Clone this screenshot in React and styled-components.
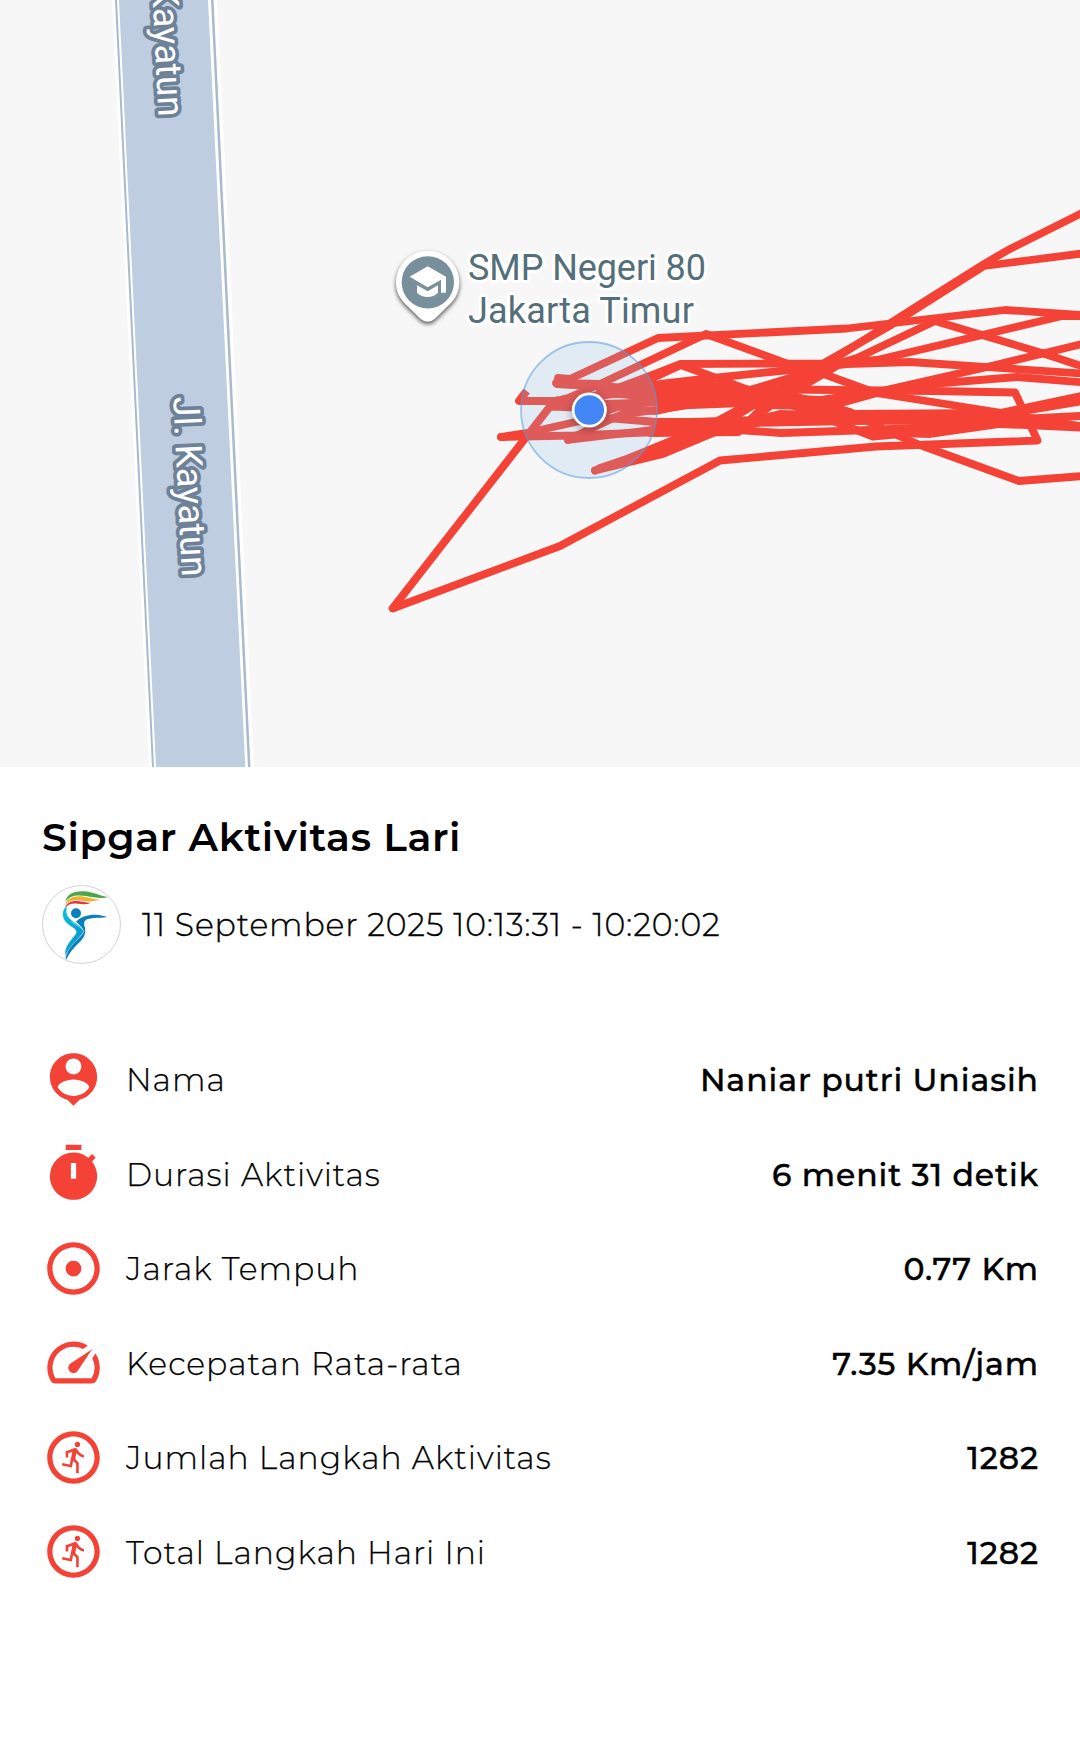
import React from 'react';
import styled, { createGlobalStyle } from 'styled-components'
import { MdTimer, MdAdjust, MdSpeed, MdOutlineRunCircle } from 'react-icons/md'

const tracks = [
    "558,378 570,379 658,338 847,328.5 1005,310 1090,315.5",
    "556,383 600,384 706,334 788,364 818,372 876,393 996,412 1090,428",
    "590,398 623,386 655,374 680,364 823,363.5 877,360 1062,316 1090,316",
    "640,384 681,365 743,388 800,408 873,436.5 900,434",
    "590,400 625,389 660,384 713,378 790,370 847,364 910,362 1090,374",
    "723,424 791,382 891,325 984,266 1090,252.5",
    "738,432 762,412 828,363 914,308 984,264 1008,250 1090,209",
    "743,392 823,368 857,358 935,321 982,335 1042,353 1090,369",
    "600,392 700,402 790,404 877,392 983,368 1090,342",
    "750,405 830,406 877,393 930,384 1017,377 1090,383",
    "558,384 625,388 700,390 786,389.5 933,391 1015,392.5 1037.5,440.5 876,446.5 720,460.5 560,546 392.5,608.5 550,406.5 590,408",
    "700,384 790,395 850,412 885,430 920,445 1019,481 1090,475.5",
    "557,400.5 600,404 640,403 700,400 790,402 850,414 1000,413 1090,394",
    "556,401 568,398 600,384",
    "501,437 575,435.5 657,432 700,422 850,417 1000,415 1090,400",
    "501,437 529,432.5 580,421 625,404 690,394 740,390",
    "568,440 590,429 620,415 690,405 770,402",
    "568,440 610,435 700,424 850,421 1000,420 1090,415.5",
    "595,470.5 663,454 730,426 780,414 850,416",
    "595,470.5 624,460 668,442 710,425 760,398 830,366",
    "600,468 640,455 680,442 705,431",
    "650,433 738,432 762,408 800,388 840,364",
    "738,430 781,433 870,430 977,425 1030,422 1090,427",
    "590,396 640,392 720,397 800,400 840,410 880,423",
    "600,404 640,410 656,411 693,403 740,402 800,402",
    "600,410 607,418 656,422 690,422 740,421 830,418",
    "645,421 690,427 740,427 780,418",
    "557,384 600,385 660,394 740,396 820,400",
    "625,390 680,384 740,390",
    "870,432 930,434 1000,424 1090,428",
]

const rows = [
    { icon: PersonPin, label: "Nama", value: "Naniar putri Uniasih" },
    { icon: MdTimer, label: "Durasi Aktivitas", value: "6 menit 31 detik" },
    { icon: MdAdjust, label: "Jarak Tempuh", value: "0.77 Km" },
    { icon: MdSpeed, label: "Kecepatan Rata-rata", value: "7.35 Km/jam" },
    { icon: MdOutlineRunCircle, label: "Jumlah Langkah Aktivitas", value: "1282" },
    { icon: MdOutlineRunCircle, label: "Total Langkah Hari Ini", value: "1282" },
]

const GlobalStyle = createGlobalStyle`
    body {
        margin: 0;
        background: #FFFFFF;
    }
`;

const Page = styled.div`
    display: flex;
    flex-direction: column;
    width: 1080px;
    height: 1738px;
    overflow: hidden;
    background: #FFFFFF;
    color: #000000;
    font-family: Montserrat, Inter, sans-serif;
`;

const MapView = styled.svg`
    display: block;
    flex: none;
    width: 1080px;
    height: 767px;
    background: #F7F7F7;
    font-family: Roboto, sans-serif;
    font-size: 36px;
`;

const Street = styled.text`
    fill: #FFFFFF;
    stroke: #6D8199;
    stroke-width: 7.5px;
    stroke-linejoin: round;
    paint-order: stroke;
    text-anchor: end;
    font-size: 36.7px;
    font-weight: 400;
`;

const Place = styled.text`
    fill: #546E7A;
    stroke: #FFFFFF;
    stroke-width: 6px;
    stroke-linejoin: round;
    paint-order: stroke;
`;

const Details = styled.div`
    display: flex;
    flex-direction: column;
    padding: 46px 42px 0;
`;

const Title = styled.h1`
    margin: 0;
    font-size: 39.4px;
    font-weight: 600;
    line-height: 48px;
    letter-spacing: 0.68px;
`;

const DateRow = styled.div`
    display: flex;
    align-items: center;
    gap: 21px;
    margin-top: 24px;
    height: 79px;
`;

const Logo = styled.svg`
    width: 79px;
    height: 79px;
`;

const DateText = styled.span`
    font-size: 31.5px;
    font-weight: 300;
    line-height: 38px;
    letter-spacing: 0.84px;
    -webkit-text-stroke: 0.35px #000000;
`;

const List = styled.div`
    display: flex;
    flex-direction: column;
    gap: 31.5px;
    margin-top: 83.5px;
`;

const Row = styled.div`
    display: flex;
    align-items: center;
    height: 63px;
    font-size: 31.5px;
    line-height: 38px;

    svg {
        width: 63px;
        height: 63px;
        margin-right: 21px;
        color: #F44336;
    }
`;

const Label = styled.span`
    flex: 1;
    padding-top: 2px;
    font-weight: 300;
    letter-spacing: 0.98px;
    -webkit-text-stroke: 0.25px #000000;
`;

const Value = styled.span`
    margin-right: -1px;
    padding-top: 2px;
    font-weight: 500;
    letter-spacing: 0.92px;
    -webkit-text-stroke: 0.4px #000000;
`;

function PersonPin() {
    return (
        <svg viewBox="0 0 24 24" fill="currentColor">
            <path d="M12 2c-4.97 0-9 4.03-9 9 0 4.17 2.84 7.67 6.69 8.69L12 22l2.31-2.31C18.16 18.67 21 15.17 21 11c0-4.97-4.03-9-9-9zm0 2c1.66 0 3 1.34 3 3s-1.34 3-3 3-3-1.34-3-3 1.34-3 3-3zm0 14.3c-2.5 0-4.71-1.28-6-3.22.03-1.99 4-3.08 6-3.08 1.99 0 5.97 1.09 6 3.08-1.29 1.94-3.5 3.22-6 3.22z" />
        </svg>
    )
}

function SipgarLogo() {
    return (
        <Logo viewBox="36 254 237 237">
            <defs>
                <linearGradient id="body" x1="0" y1="0" x2="1" y2="1">
                    <stop offset="0" stopColor="#00C4DC" />
                    <stop offset="1" stopColor="#0A8FC8" />
                </linearGradient>
            </defs>
            <circle cx="154.5" cy="372.5" r="117" fill="#FFFFFF" stroke="#BDBDBD" strokeWidth="2" />
            <path d="M107 303C108 284 130 272 160 273C190 274 208 287 235 290C214 297 190 291 168 287C140 283 120 286 107 303Z" fill="#4CA64C" />
            <path d="M106 314C108 296 128 287 152 288C176 290 190 298 209 297C194 305 174 304 156 301C132 298 116 301 106 314Z" fill="#F5B02E" />
            <path d="M105 324C107 309 122 301 142 302C158 303 166 307 182 307C170 313 156 312 144 310C126 308 114 311 105 324Z" fill="#E0393A" />
            <path d="M105 322C93 338 98 360 118 374C134 386 143 390 138 400C126 418 102 436 106 466C114 440 142 420 158 399C164 386 150 378 132 366C112 352 105 340 111 321Z" fill="url(#body)" />
            <circle cx="138" cy="339" r="15" fill="#0780BE" />
            <path d="M138 364C150 350 176 342 198 343C212 344 222 347 232 350C210 354 190 351 174 356C162 360 160 368 165 382C168 404 160 414 146 428C130 444 116 460 108 479C104 456 118 438 138 420C154 405 164 396 158 385C154 377 146 372 138 364Z" fill="#0780BE" />
            <path d="M124 364C140 376 158 382 161 394C156 410 116 434 108 466" fill="none" stroke="#FFFFFF" strokeWidth="1.5" />
        </Logo>
    )
}

function RunMap() {
    return (
        <MapView viewBox="0 0 1080 767">
            <polygon points="112,0 217,0 254,767 149,767" fill="#FFFFFF" />
            <polygon points="115,0 213.5,0 250.5,767 152,767" fill="#A9BACD" />
            <polygon points="117,0 211,0 248,767 154,767" fill="#FFFFFF" />
            <polygon points="119,0 208,0 245.3,767 156,767" fill="#BECDDF" />
            <Street transform="translate(158.5 117) rotate(87.2)">Jl. Kayatun</Street>
            <Street transform="translate(182 577) rotate(87.2)">Jl. Kayatun</Street>

            <g fill="none" stroke="#F44336" strokeWidth="7.8" strokeLinejoin="round" strokeLinecap="round">
                {tracks.map((points) => <polyline key={points} points={points} />)}
                <polyline points="526.7,391 519,401 557,401" strokeLinecap="butt" />
            </g>

            <Place x="468" y="279.7" letterSpacing="-0.08">SMP Negeri 80</Place>
            <Place x="468" y="322.8" letterSpacing="0.17">Jakarta Timur</Place>

            <g transform="translate(380 230) scale(0.3333)">
                <path d="M143 62C91 62 48 104 48 157C48 184 58 204 76 222L122 267Q143 284 164 267L210 222C228 204 238 184 238 157C238 104 195 62 143 62Z" fill="#FFFFFF" style={{ filter: "drop-shadow(0 7px 6px rgba(0, 0, 0, 0.65))" }} />
                <circle cx="143.5" cy="157" r="78.5" fill="#78909C" />
                <path d="M143 109L198 140V188H183V149L143 172L89 140Z" fill="#FFFFFF" />
                <path d="M111 166L143 184L174 166V188Q160 201 143 201Q125 201 111 188Z" fill="#FFFFFF" />
            </g>

            <circle cx="589" cy="410" r="68" fill="rgba(142, 192, 237, 0.2)" stroke="rgba(90, 155, 220, 0.55)" strokeWidth="1.8" />
            <circle cx="589.3" cy="410" r="17.5" fill="#FFFFFF" style={{ filter: "drop-shadow(0 2px 4px rgba(0, 0, 0, 0.35))" }} />
            <circle cx="589.3" cy="410" r="14.8" fill="#4285F4" />
        </MapView>
    )
}

function App() {
    return (
        <Page>
            <GlobalStyle />
            <RunMap />
            <Details>
                <Title>Sipgar Aktivitas Lari</Title>
                <DateRow>
                    <SipgarLogo />
                    <DateText>11 September 2025 10:13:31 - 10:20:02</DateText>
                </DateRow>
                <List>
                    {rows.map(({ icon: Icon, label, value }) => (
                        <Row key={label}>
                            <Icon />
                            <Label>{label}</Label>
                            <Value>{value}</Value>
                        </Row>
                    ))}
                </List>
            </Details>
        </Page>
    );
}

export default App;
